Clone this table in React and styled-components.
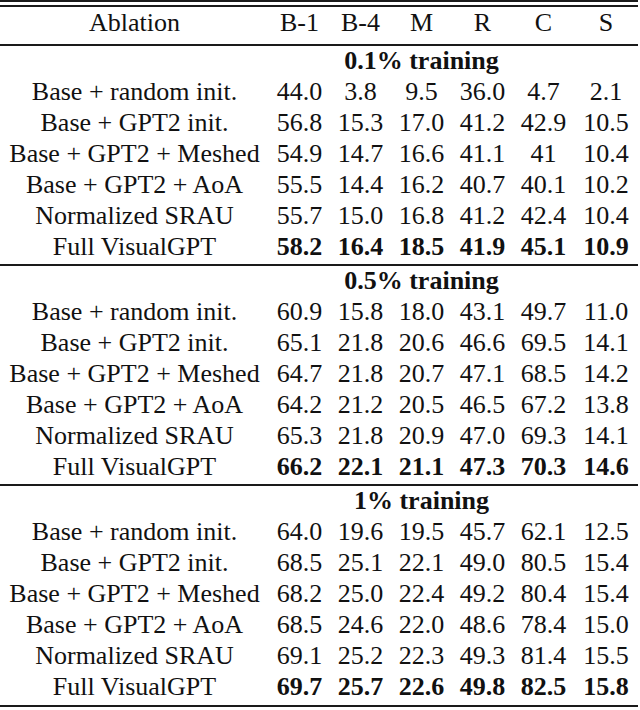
import React from "react";
import styled, { createGlobalStyle } from "styled-components";

const GlobalStyle = createGlobalStyle`
  html, body {
    margin: 0;
    padding: 0;
    background: #fff;
  }
  body {
    font-family: "Liberation Serif", "Times New Roman", serif;
    color: #111;
  }
`;

const Table = styled.table`
  width: 638px;
  table-layout: fixed;
  border-collapse: separate;
  border-spacing: 0;
  border-top: 7px double #1a1a1a;
  font-size: 26px;
`;

const HeadCell = styled.th`
  box-sizing: border-box;
  height: 39px;
  padding: 0 0 6px;
  font-weight: normal;
  text-align: center;
  border-bottom: 2px solid #1a1a1a;
  line-height: 1;
  vertical-align: middle;
`;

const SectionCell = styled.td`
  height: 30px;
  padding: 0;
  font-weight: bold;
  text-align: center;
  white-space: nowrap;
  line-height: 30px;
  vertical-align: top;
  border-top: ${(p) => (p.$rule ? "2px solid #1a1a1a" : "none")};
`;

const Row = styled.tr`
  td {
    box-sizing: border-box;
    height: ${(p) => (p.$end ? "36px" : p.$pad ? "33px" : "31px")};
    padding: ${(p) => (p.$pad ? "0 0 2px" : "0")};
    line-height: 31px;
    vertical-align: top;
    border-bottom: ${(p) => (p.$end ? "2px solid #1a1a1a" : "none")};
  }
`;

const LabelCell = styled.td`
  text-align: center;
  white-space: nowrap;
`;

const NumCell = styled.td`
  text-align: center;
  white-space: nowrap;
  font-weight: ${(p) => (p.$bold ? "bold" : "normal")};
`;

const metrics = ["B-1", "B-4", "M", "R", "C", "S"];
const widths = [269, 61, 61, 61, 61, 61, 64];

const sections = [
  {
    title: "0.1% training",
    rows: [
      ["Base + random init.", "44.0", "3.8", "9.5", "36.0", "4.7", "2.1"],
      ["Base + GPT2 init.", "56.8", "15.3", "17.0", "41.2", "42.9", "10.5"],
      ["Base + GPT2 + Meshed", "54.9", "14.7", "16.6", "41.1", "41", "10.4"],
      ["Base + GPT2 + AoA", "55.5", "14.4", "16.2", "40.7", "40.1", "10.2"],
      ["Normalized SRAU", "55.7", "15.0", "16.8", "41.2", "42.4", "10.4"],
      ["Full VisualGPT", "58.2", "16.4", "18.5", "41.9", "45.1", "10.9"],
    ],
  },
  {
    title: "0.5% training",
    rows: [
      ["Base + random init.", "60.9", "15.8", "18.0", "43.1", "49.7", "11.0"],
      ["Base + GPT2 init.", "65.1", "21.8", "20.6", "46.6", "69.5", "14.1"],
      ["Base + GPT2 + Meshed", "64.7", "21.8", "20.7", "47.1", "68.5", "14.2"],
      ["Base + GPT2 + AoA", "64.2", "21.2", "20.5", "46.5", "67.2", "13.8"],
      ["Normalized SRAU", "65.3", "21.8", "20.9", "47.0", "69.3", "14.1"],
      ["Full VisualGPT", "66.2", "22.1", "21.1", "47.3", "70.3", "14.6"],
    ],
  },
  {
    title: "1% training",
    rows: [
      ["Base + random init.", "64.0", "19.6", "19.5", "45.7", "62.1", "12.5"],
      ["Base + GPT2 init.", "68.5", "25.1", "22.1", "49.0", "80.5", "15.4"],
      ["Base + GPT2 + Meshed", "68.2", "25.0", "22.4", "49.2", "80.4", "15.4"],
      ["Base + GPT2 + AoA", "68.5", "24.6", "22.0", "48.6", "78.4", "15.0"],
      ["Normalized SRAU", "69.1", "25.2", "22.3", "49.3", "81.4", "15.5"],
      ["Full VisualGPT", "69.7", "25.7", "22.6", "49.8", "82.5", "15.8"],
    ],
  },
];

export default function App() {
  return (
    <>
      <GlobalStyle />
      <Table>
        <colgroup>
          {widths.map((w, i) => (
            <col key={i} style={{ width: w }} />
          ))}
        </colgroup>
        <thead>
          <tr>
            <HeadCell>Ablation</HeadCell>
            {metrics.map((m) => (
              <HeadCell key={m}>{m}</HeadCell>
            ))}
          </tr>
        </thead>
        {sections.map((sec, si) => {
          const finalSection = si === sections.length - 1;
          return (
            <tbody key={sec.title}>
              <tr>
                <SectionCell $rule={si > 0} />
                <SectionCell $rule={si > 0} />
                <SectionCell $rule={si > 0} colSpan={3}>
                  {sec.title}
                </SectionCell>
                <SectionCell $rule={si > 0} />
                <SectionCell $rule={si > 0} />
              </tr>
              {sec.rows.map((r, ri) => {
                const last = ri === sec.rows.length - 1;
                const best = r[0] === "Full VisualGPT";
                return (
                  <Row
                    key={r[0]}
                    $pad={last}
                    $end={last && finalSection}
                  >
                    <LabelCell>{r[0]}</LabelCell>
                    {r.slice(1).map((v, vi) => (
                      <NumCell key={vi} $bold={best}>
                        {v}
                      </NumCell>
                    ))}
                  </Row>
                );
              })}
            </tbody>
          );
        })}
      </Table>
    </>
  );
}
